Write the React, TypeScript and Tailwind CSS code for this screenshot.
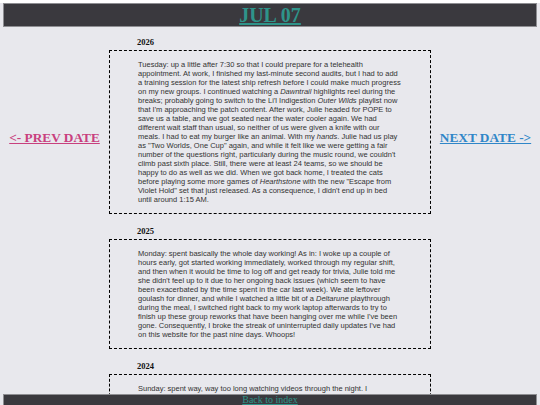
import React from "react";

type Entry = { year: string; body: React.ReactNode };

const entries: Entry[] = [
  {
    year: "2026",
    body: (
      <>
        Tuesday: up a little after 7:30 so that I could prepare for a telehealth appointment. At work, I
        finished my last-minute second audits, but I had to add a training session for the latest ship
        refresh before I could make much progress on my new groups. I continued watching a <i>Dawntrail</i>{" "}
        highlights reel during the breaks; probably going to switch to the Li'l Indigestion <i>Outer Wilds</i>{" "}
        playlist now that I'm approaching the patch content. After work, Julie headed for POPE to save us a
        table, and we got seated near the water cooler again. We had different wait staff than usual, so
        neither of us were given a knife with our meals. I had to eat my burger like an animal. With my{" "}
        <i>hands</i>. Julie had us play as "Two Worlds, One Cup" again, and while it felt like we were getting a
        fair number of the questions right, particularly during the music round, we couldn't climb past sixth
        place. Still, there were at least 24 teams, so we should be happy to do as well as we did. When we got
        back home, I treated the cats before playing some more games of <i>Hearthstone</i> with the new "Escape
        from Violet Hold" set that just released. As a consequence, I didn't end up in bed until around 1:15 AM.
      </>
    ),
  },
  {
    year: "2025",
    body: (
      <>
        Monday: spent basically the whole day working! As in: I woke up a couple of hours early, got started
        working immediately, worked through my regular shift, and then when it would be time to log off and get
        ready for trivia, Julie told me she didn't feel up to it due to her ongoing back issues (which seem to
        have been exacerbated by the time spent in the car last week). We ate leftover goulash for dinner, and
        while I watched a little bit of a <i>Deltarune</i> playthrough during the meal, I switched right back to
        my work laptop afterwards to try to finish up these group reworks that have been hanging over me while
        I've been gone. Consequently, I broke the streak of uninterrupted daily updates I've had on this website
        for the past nine days. Whoops!
      </>
    ),
  },
  {
    year: "2024",
    body: (
      <>
        Sunday: spent way, way too long watching videos through the night. I understandably slept in pretty
        late, so most of the afternoon was spent trying to feel like a person again. Julie and I ordered in for
        dinner and watched a couple of episodes of something before calling it an early night.
      </>
    ),
  },
];

function EntryBlock({ entry }: { entry: Entry }) {
  return (
    <section className="mt-[12px] first:mt-[10px]">
      <h3 className="pl-[28px] mb-[3px] font-['Liberation_Serif',serif] text-[8.5px] leading-[10px] font-bold text-[#111]">
        {entry.year}
      </h3>
      <div className="border border-dashed border-black px-[28px] py-[9px] font-['Liberation_Sans',Arial,sans-serif] text-[7.5px] leading-[9px] text-[#333]">
        <p>{entry.body}</p>
      </div>
    </section>
  );
}

export default function App() {
  return (
    <div className="min-h-screen bg-[#e8e8ed] pb-[20px]">
      <header className="mx-[3px] mt-[3px] h-[24px] border border-[#8e8e92] bg-[#3a393e] flex items-center justify-center">
        <a
          href="#"
          className="font-['Liberation_Serif',serif] text-[20px] leading-[22px] font-bold text-[#2e948a] underline"
        >
          JUL 07
        </a>
      </header>

      <div className="flex">
        <div className="w-[109px] shrink-0 pt-[97px] text-center">
          <a
            href="#"
            className="font-['Liberation_Serif',serif] text-[13.3px] leading-[15px] font-bold text-[#c8407e] underline"
          >
            &lt;- PREV DATE
          </a>
        </div>

        <main className="w-[322px] shrink-0">
          {entries.map((e) => (
            <EntryBlock key={e.year} entry={e} />
          ))}
        </main>

        <div className="flex-1 pt-[97px] text-center">
          <a
            href="#"
            className="font-['Liberation_Serif',serif] text-[13.3px] leading-[15px] font-bold text-[#2f86c8] underline"
          >
            NEXT DATE -&gt;
          </a>
        </div>
      </div>

      <footer className="fixed bottom-0 left-[3px] right-[3px] h-[11px] border-t border-x border-[#8e8e92] bg-[#3a393e] flex justify-center">
        <a
          href="#"
          className="font-['Liberation_Serif',serif] text-[10px] leading-[10px] text-[#2e948a] underline"
        >
          Back to index
        </a>
      </footer>
    </div>
  );
}
